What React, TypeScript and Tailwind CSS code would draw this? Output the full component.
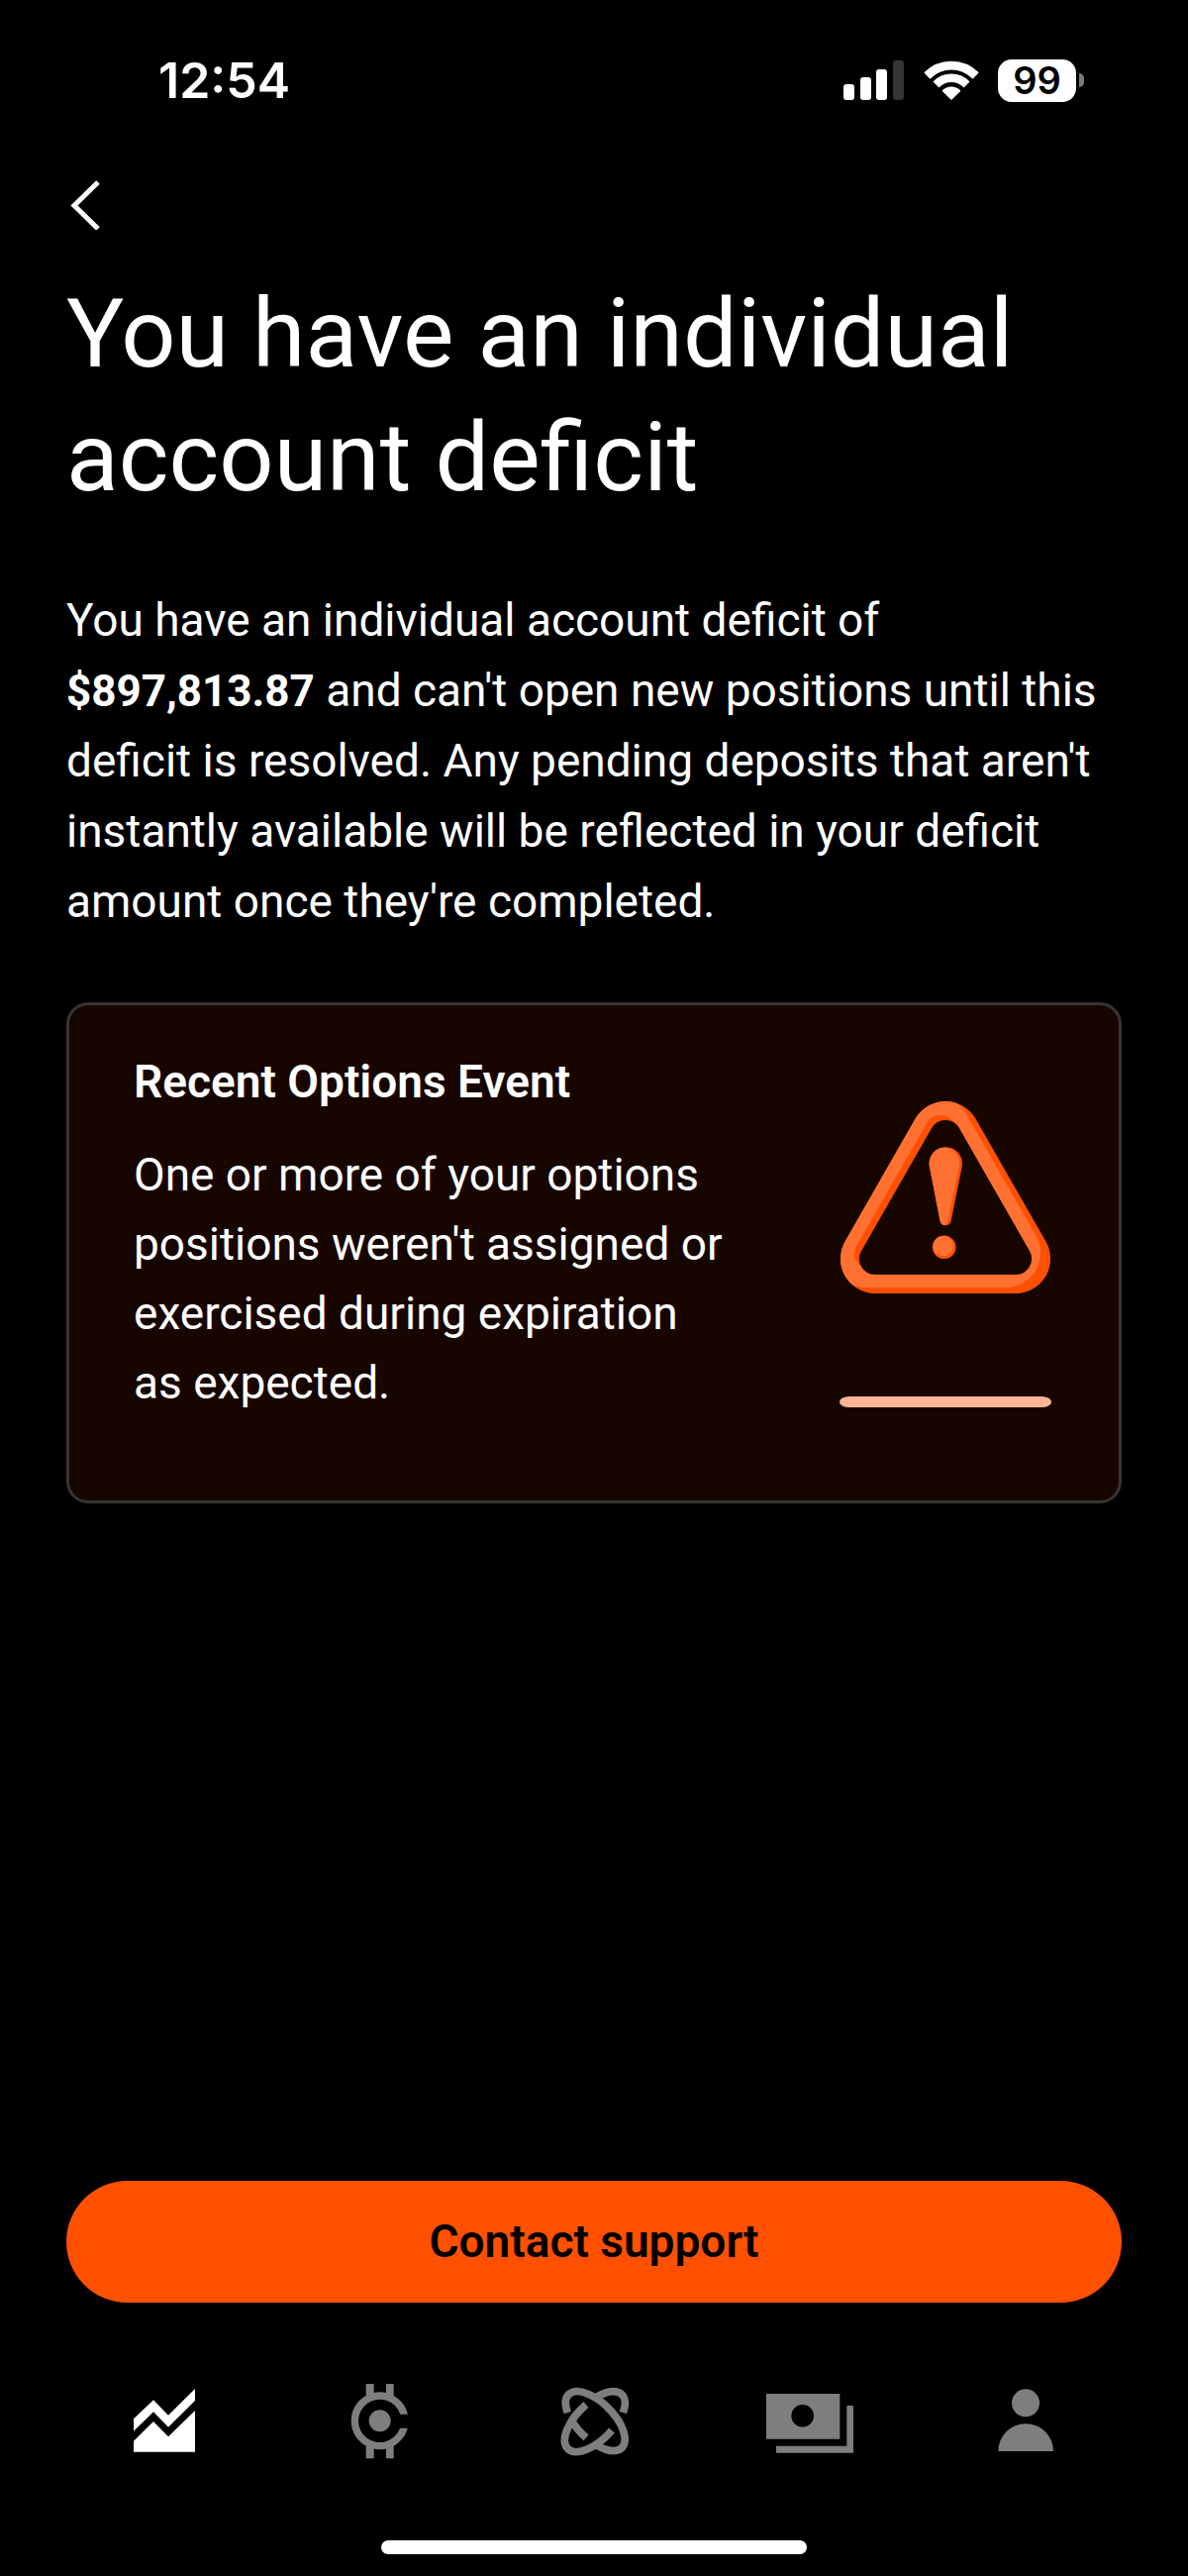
import type { ReactNode } from "react";

type Tab = {
    label: string;
    active?: boolean;
    icon: ReactNode;
};

const tabs: Tab[] = [
    {
        label: "Investing",
        active: true,
        icon: (
            <>
                <path d="M42 121 102 64 147 110 228 30V66L147 146 102 100 42 158Z" />
                <path d="M42 188 102 129 147 175 228 96V221H42Z" />
            </>
        ),
    },
    {
        label: "Crypto",
        icon: (
            <>
                <path d="M218.7 107A87 87 0 1 0 218.2 149H195.2A65 65 0 1 1 195.8 107Z" />
                <circle cx="134" cy="127" r="33" />
                <path d="M92 15H116V52H92ZM153 15H176V52H153ZM92 202H116V241H92ZM153 202H176V241H153Z" />
            </>
        ),
    },
    {
        label: "Universe",
        icon: (
            <g fill="none" stroke="currentColor" strokeWidth="23">
                <path d="M49 102A114 56 45 1 1 133 199" />
                <path d="M62 128A114 56 45 0 0 105 178" />
                <path d="M217 102A114 56 -45 0 0 133 57" />
                <path d="M105 78A114 56 -45 1 0 183 156" />
            </g>
        ),
    },
    {
        label: "Cash",
        icon: (
            <>
                <path fillRule="evenodd" d="M0 45H223V182H0ZM110 78A34 34 0 1 0 110 146A34 34 0 1 0 110 78Z" />
                <path d="M244 81H264V224H30V203H244Z" />
            </>
        ),
    },
    {
        label: "Account",
        icon: (
            <>
                <circle cx="132" cy="73" r="42" />
                <path d="M49 219A83.5 83.5 0 0 1 216 219Z" />
            </>
        ),
    },
];

function StatusBar() {
    return (
        <header className="flex h-[162px] items-center justify-between pl-[160px] pr-[105px] font-[Inter,sans-serif]">
            <time className="text-[50px] leading-none font-semibold">12:54</time>
            <div className="flex items-center gap-[19px]">
                <svg viewBox="0 0 62 40" className="h-10 w-[62px]" fill="currentColor" aria-hidden="true">
                    <rect x="0" y="24" width="11" height="16" rx="3" />
                    <rect x="17" y="17" width="11" height="23" rx="3" />
                    <rect x="33" y="9" width="11" height="31" rx="3" />
                    <rect x="50" y="0" width="11" height="40" rx="3" fill="#343434" />
                </svg>
                {/* Wifi: three bands of a 90 degree fan */}
                <svg viewBox="0 0 56 40" className="h-10 w-14" fill="currentColor" aria-hidden="true">
                    <path
                        stroke="currentColor"
                        strokeWidth="1.5"
                        strokeLinejoin="round"
                        d="M1.4 12.4A38 38 0 0 1 54.6 12.4L49.5 17.7A30.5 30.5 0 0 0 6.5 17.7ZM10.5 21.5A24.8 24.8 0 0 1 45.5 21.5L40.5 26.4A17.8 17.8 0 0 0 15.5 26.4ZM19.6 30.6A12 12 0 0 1 36.4 30.6L28 39Z"
                    />
                </svg>
                <div className="flex items-center gap-[3px]">
                    <span className="flex h-[43px] w-[79px] items-center justify-center rounded-[14px] bg-white text-[38px] leading-none font-semibold text-black">
                        99
                    </span>
                    <span className="h-[14px] w-[5px] rounded-r-full bg-[#7a7a7a]" />
                </div>
            </div>
        </header>
    );
}

function WarningArt() {
    const outer =
        "M33.6 173.6 104.6 49.6A35 35 0 0 1 165.4 49.6L236.4 173.6A35 35 0 0 1 206 226H64A35 35 0 0 1 33.6 173.6Z";
    const inner =
        "M50.1 183 121.1 59A16 16 0 0 1 148.9 59L219.9 183A16 16 0 0 1 206 207H64A16 16 0 0 1 50.1 183Z";
    const mark = "M118.8 97.5A16.7 16.7 0 1 1 151.8 97.5L140.6 153A5.7 5.7 0 0 1 129.6 153Z";

    return (
        <svg viewBox="28 30 214 312" className="h-[312px] w-[214px] shrink-0" aria-hidden="true">
            <clipPath id="outer">
                <path d={outer} />
            </clipPath>
            <clipPath id="mark">
                <path d={mark} />
            </clipPath>

            {/* Frame */}
            <path d={outer} fill="#ff5000" />
            <g clipPath="url(#outer)">
                <path d={outer} fill="#ff7033" transform="translate(-10 -6)" />
                <path d={inner} fill="#ff5000" transform="translate(-5 -5)" />
            </g>
            <path d={inner} fill="#170600" />

            {/* Exclamation mark */}
            <path d={mark} fill="#ff5000" />
            <g clipPath="url(#mark)">
                <path d={mark} fill="#ff7033" transform="translate(-3 0)" />
            </g>
            <circle cx="133.7" cy="179.3" r="11.8" fill="#ff5000" />
            <circle cx="132.6" cy="178.2" r="10.3" fill="#ff7033" />

            {/* Ground line */}
            <rect x="28" y="330" width="214" height="11" rx="10" ry="5.5" fill="#ffb495" />
        </svg>
    );
}

export default function App() {
    return (
        <div className="flex min-h-screen flex-col bg-black font-[Roboto,sans-serif] text-white">
            <StatusBar />

            <main className="flex flex-1 flex-col px-[67px] pt-5">
                <button type="button" aria-label="Back" className="self-start">
                    <svg viewBox="0 0 40 50" className="h-[50px] w-10" fill="none" stroke="currentColor" strokeWidth="5" aria-hidden="true">
                        <path d="M32 2 8 25.5 32 49" />
                    </svg>
                </button>

                <h1 className="mt-[43px] text-[97px] leading-[125px] font-normal">
                    You have an individual
                    <br />
                    account deficit
                </h1>

                <p className="mt-[66px] text-[46px] leading-[71px] font-normal">
                    You have an individual account deficit of
                    <br />
                    <strong className="text-[44px] leading-none font-bold">$897,813.87</strong> and can't open new positions until this
                    <br />
                    deficit is resolved. Any pending deposits that aren't
                    <br />
                    instantly available will be reflected in your deficit
                    <br />
                    amount once they're completed.
                </p>

                <section className="mt-[66px] flex items-start justify-between rounded-[22px] border-3 border-[#383432] bg-[#170600] pt-[42px] pr-[68px] pb-[84px] pl-[65px]">
                    <div>
                        <h2 className="text-[46px] leading-[70px] font-semibold">Recent Options Event</h2>
                        <p className="mt-6 text-[46px] leading-[70px] font-normal">
                            One or more of your options
                            <br />
                            positions weren't assigned or
                            <br />
                            exercised during expiration
                            <br />
                            as&nbsp;expected.
                        </p>
                    </div>
                    <div className="pt-[53px]">
                        <WarningArt />
                    </div>
                </section>
            </main>

            <footer className="px-[67px] pb-[22px]">
                <button type="button" className="h-[123px] w-full rounded-full bg-[#ff5000] text-[46px] font-semibold text-black">
                    Contact support
                </button>
                <nav className="mt-[77px] flex justify-between pr-[53px] pl-[54px]">
                    {tabs.map((tab) => (
                        <a key={tab.label} href="#" aria-label={tab.label} className={tab.active ? "text-white" : "text-[#7e7e7e]"}>
                            <svg viewBox="0 0 264 264" className="size-[88px]" fill="currentColor" aria-hidden="true">
                                {tab.icon}
                            </svg>
                        </a>
                    ))}
                </nav>
                <div className="mx-auto mt-[75px] h-[14px] w-[430px] rounded-full bg-white" />
            </footer>
        </div>
    );
}
